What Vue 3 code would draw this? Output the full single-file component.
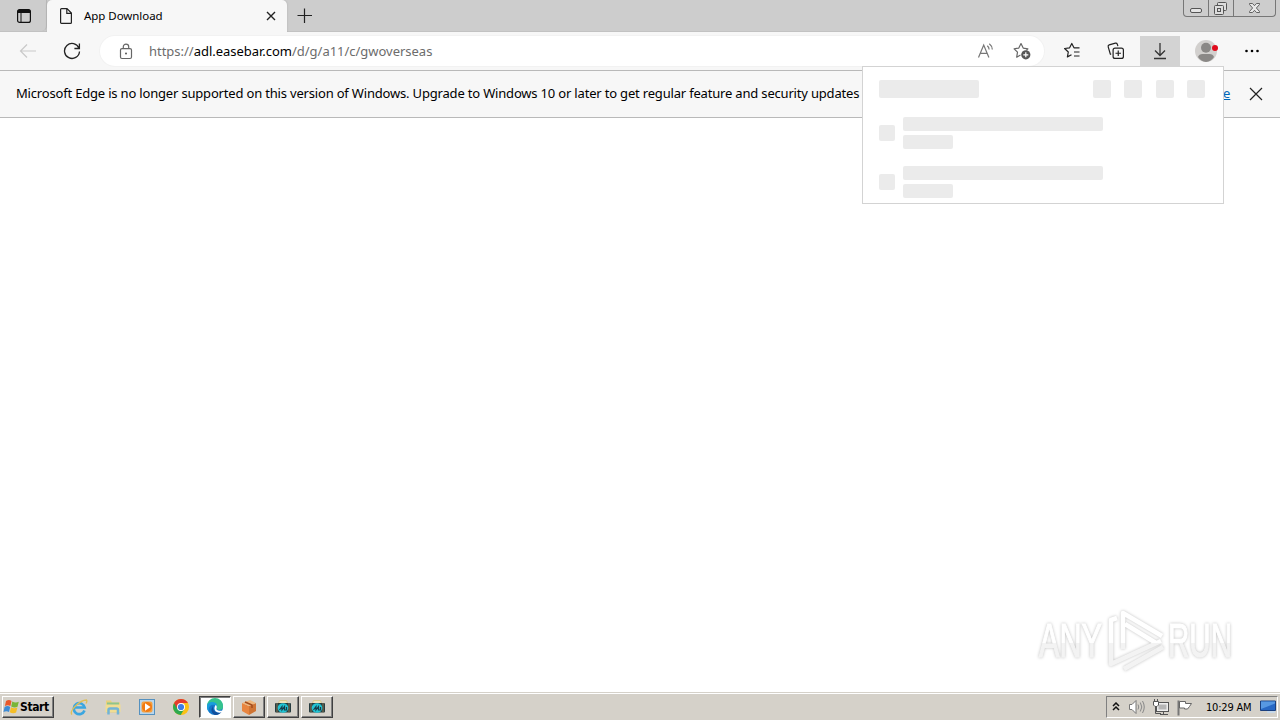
<template>
    <div class="screen">
        <header class="tabstrip">
            <div class="tab-actions">
                <svg width="16" height="16" viewBox="0 0 16 16">
                    <rect x="1.6" y="1.6" width="12.8" height="12.8" rx="2" fill="none" stroke="#111" stroke-width="1.2" />
                    <path d="M1.5 5V3.5q0-2 2-2h9q2 0 2 2V5z" fill="#111" />
                    <path d="M5 5v9" stroke="#111" />
                </svg>
            </div>
            <div class="tab">
                <svg width="14" height="16" viewBox="0 0 14 16" class="page-icon">
                    <path d="M1.6 1.5q0-.9.9-.9H8l4.4 4.500v9.400q0 .9-.9.9h-9q-.9 0-.9-.9zM7.800.8v4.500h4.400" fill="none" stroke="#222" stroke-width="1.2" />
                </svg>
                <span class="tab-title">{{ title }}</span>
                <svg width="10" height="10" viewBox="0 0 10 10" class="tab-close">
                    <path d="M1 1l8 8M9 1L1 9" stroke="#222" stroke-width="1.4" />
                </svg>
            </div>
            <svg width="16" height="16" viewBox="0 0 16 16" class="new-tab">
                <path d="M7.500 0.500v14.500M0.500 7.500h14.500" stroke="#222" stroke-width="1.200" />
            </svg>
            <div class="window-buttons">
                <span class="win-btn">
                    <svg width="24" height="16" viewBox="0 0 24 16">
                        <rect x="6.500" y="8.500" width="11" height="4" rx="1.500" fill="#e4e4e4" stroke="#555" />
                    </svg>
                </span>
                <span class="win-btn">
                    <svg width="24" height="16" viewBox="0 0 24 16">
                        <rect x="8.5" y="2.5" width="9" height="8" rx="1" fill="#ddd" stroke="#555" />
                        <rect x="5.5" y="5.5" width="9" height="9" rx="1" fill="#ddd" stroke="#555" />
                        <rect x="8.5" y="8.5" width="3" height="3" fill="#ddd" stroke="#555" />
                    </svg>
                </span>
                <span class="win-btn wide">
                    <svg width="41" height="16" viewBox="0 0 41 16">
                        <path d="M15.500 3.500h3l2 2.200 2-2.200h3v1L22.400 8l3.100 3.500v1h-3l-2-2.200-2 2.200h-3v-1L18.600 8l-3.100-3.500z" fill="#e8e8e8" stroke="#555" stroke-width=".9" />
                    </svg>
                </span>
            </div>
        </header>

        <div class="toolbar">
            <svg width="18" height="16" viewBox="0 0 18 16" class="back">
                <path d="M17 8H1.500M8 1.500L1.500 8 8 14.500" fill="none" stroke="#c9c9c9" stroke-width="1.200" />
            </svg>
            <svg width="18" height="18" viewBox="0 0 18 18" class="reload">
                <path d="M16 6.200A7.500 7.500 0 1 0 16.500 9.500M16.400 1.500v5h-5" fill="none" stroke="#222" stroke-width="1.300" />
            </svg>
            <div class="address">
                <svg width="14" height="17" viewBox="0 0 14 17" class="lock">
                    <rect x="1.500" y="5.600" width="11" height="9.900" rx="1.500" fill="none" stroke="#666" stroke-width="1.200" />
                    <path d="M4.300 5.500V3.800a2.700 2.700 0 0 1 5.400 0v1.700" fill="none" stroke="#666" stroke-width="1.200" />
                    <circle cx="7" cy="10.500" r="1" fill="#555" />
                </svg>
                <span class="url">https://<b>adl.easebar.com</b><i>/d/g/a11/c/gwoverseas</i></span>
                <svg width="18" height="18" viewBox="0 0 18 18" class="read">
                    <path d="M1.500 15.500L6.700 3l5.200 12.500M3.200 11.400h7M10.300 3.800a5 5 0 0 1 1.800 3.700M12.300 1.800a7.500 7.500 0 0 1 3 5.700" fill="none" stroke="#777" stroke-width="1.200" />
                </svg>
                <svg width="18" height="18" viewBox="0 0 18 18" class="star">
                    <path d="M7.500 13l-3.800 2.200.8-5-3.400-3.400 4.700-.7L8 1.600l2.200 4.500 4.700.7-1.600 1.600" fill="none" stroke="#666" stroke-width="1.200" stroke-linejoin="round" />
                    <circle cx="12.800" cy="12.800" r="4.600" fill="#555" />
                    <path d="M12.800 10.300v5M10.300 12.800h5" stroke="#fff" stroke-width="1.200" />
                </svg>
            </div>
            <div class="tools">
                <span class="tool">
                    <svg width="18" height="18" viewBox="0 0 18 18">
                        <path d="M8.500 12.800l-4.100 2.100.9-4.900-3.700-3.500 5-.7L8.800 1.500l2.200 4.300h5.500M11 10h5.500M11 14h5.500" fill="none" stroke="#222" stroke-width="1.200" stroke-linejoin="round" />
                    </svg>
                </span>
                <span class="tool">
                    <svg width="18" height="18" viewBox="0 0 18 18">
                        <path d="M4.200 12.400L3.300 12 1.200 4.800q-.4-1.400 1-1.900L8.400 1.200q1.400-.3 1.900 1l.6 2" fill="none" stroke="#222" stroke-width="1.200" />
                        <rect x="6.100" y="6.100" width="10.300" height="10.300" rx="2" fill="#f7f7f7" stroke="#222" stroke-width="1.200" />
                        <path d="M11.250 8.500v5.500M8.500 11.250H14" stroke="#222" stroke-width="1.200" />
                    </svg>
                </span>
                <span class="tool active">
                    <svg width="18" height="18" viewBox="0 0 18 18">
                        <path d="M9 1v12.500M4 8.500l5 5 5-5M3 16.500h12" fill="none" stroke="#333" stroke-width="1.300" />
                    </svg>
                </span>
                <span class="tool profile">
                    <svg width="24" height="24" viewBox="0 0 24 24">
                        <circle cx="12" cy="12" r="11" fill="#d2d0ce" />
                        <circle cx="12" cy="8.700" r="5" fill="#8a8886" />
                        <path d="M4 18q1-3 4.500-3h7q3.500 0 4.500 3A11 11 0 0 1 12 23a11 11 0 0 1-8-5z" fill="#8a8886" />
                        <circle cx="21" cy="9" r="3" fill="#e00b1c" />
                    </svg>
                </span>
                <span class="tool more">
                    <svg width="18" height="18" viewBox="0 0 18 18">
                        <circle cx="3.500" cy="9" r="1.300" /><circle cx="9" cy="9" r="1.300" /><circle cx="14.500" cy="9" r="1.300" />
                    </svg>
                </span>
            </div>
        </div>

        <div class="banner">
            <span class="banner-text">{{ notice }}</span>
            <a class="learn">e</a>
            <svg width="14" height="14" viewBox="0 0 14 14">
                <path d="M1 1l12 12M13 1L1 13" stroke="#222" stroke-width="1.200" />
            </svg>
        </div>

        <main class="page"></main>

        <section class="downloads">
            <div class="dl-head">
                <span class="bone heading"></span>
                <span v-for="n in 4" :key="n" class="bone action"></span>
            </div>
            <div v-for="n in 2" :key="n" class="dl-row">
                <span class="bone file"></span>
                <div>
                    <div class="bone name"></div>
                    <div class="bone size"></div>
                </div>
            </div>
        </section>

        <svg class="watermark" width="230" height="76" viewBox="0 0 230 76">
            <defs>
                <linearGradient id="fade" x1="0" y1="14" x2="0" y2="66" gradientUnits="userSpaceOnUse">
                    <stop offset=".49" stop-color="#fff" />
                    <stop offset=".5" stop-color="#f3f3f3" />
                </linearGradient>
            </defs>
            <g fill="url(#fade)" stroke="url(#fade)" stroke-width="1.200" font-family="Liberation Sans Narrow, Liberation Sans, sans-serif" font-size="49">
                <text x="7" y="53.500" textLength="63" lengthAdjust="spacingAndGlyphs">ANY</text>
                <text x="136" y="53.500" textLength="64" lengthAdjust="spacingAndGlyphs">RUN</text>
            </g>
            <path
                d="M91 46V10l39 23M93 21l31 19M85 15l-6 2v44l50-23M92 66l39-22" fill="none" stroke="url(#fade)"
                stroke-width="4.500" stroke-linejoin="round"
            />
        </svg>

        <footer class="taskbar">
            <div class="start">
                <svg width="17" height="16" viewBox="0 0 17 16">
                    <path d="M3 2q3-2 5.500 0L7.400 7q-2.500-1.700-5.500 0z" fill="#e9582b" />
                    <path d="M9.300 2.400q3 1.800 6.500.3l-1.300 5q-3 1.500-6.300-.3z" fill="#79b537" />
                    <path d="M1.600 8q3-1.800 5.600 0L6 13q-2.500-1.700-5.500 0z" fill="#3d8bd5" />
                    <path d="M8 8.300q3 1.800 6.400.3l-1.300 5q-3 1.500-6.300-.3z" fill="#f5be27" />
                </svg>
                <span>Start</span>
            </div>
            <div class="quick">
                <svg width="18" height="18" viewBox="0 0 18 18">
                    <path d="M14.500 12.500A5.500 5.500 0 1 1 14.700 9.500H5" fill="none" stroke="#3ba6e0" stroke-width="2.600" />
                    <path d="M2 16.500Q-.5 14 5.500 8T16.500 2q1 1-.5 3.500" fill="none" stroke="#e0bf55" stroke-width="1.300" />
                </svg>
                <svg width="18" height="18" viewBox="0 0 18 18">
                    <path d="M2 2.500h5l1 2h8v10H2z" fill="#e9d27b" />
                    <path d="M3 4.500h12v3H3z" fill="#8fc48a" />
                    <path d="M1.500 6.500h15V14h-15z" fill="#f1dd92" />
                    <path d="M4.500 16.500V12q0-1.500 1.500-1.500h6.500q1.500 0 1.500 1.500v4.500" fill="none" stroke="#72b4d6" stroke-width="2.500" />
                </svg>
                <svg width="18" height="18" viewBox="0 0 18 18">
                    <rect x="1.500" y="1.500" width="15" height="15" fill="#b9d6ec" stroke="#5591bf" />
                    <rect x="3.500" y="3.500" width="11" height="11" rx="2" fill="#f5a243" />
                    <circle cx="9" cy="9" r="5" fill="#f27b12" />
                    <path d="M7 5.300l5.500 3.700L7 12.700z" fill="#fff" />
                </svg>
                <svg width="18" height="18" viewBox="0 0 18 18">
                    <circle cx="9" cy="9" r="8" fill="#fbc116" />
                    <path d="M2.070 5A8 8 0 0 0 8.700 17L12.300 11 9 9z" fill="#2da94f" />
                    <path d="M2.070 5A8 8 0 0 1 15.930 5H9L5.500 11z" fill="#e33b2e" />
                    <circle cx="9" cy="9" r="4" fill="#fff" /><circle cx="9" cy="9" r="3.100" fill="#3c7de6" />
                </svg>
            </div>
            <div class="windows">
                <div class="task pressed">
                    <svg width="18" height="18" viewBox="0 0 18 18">
                        <circle cx="9" cy="9" r="8" fill="#1477ca" />
                        <path d="M1 8A8 8 0 0 1 17 8q.6 4-4 4-3 0-2-3Q10.500 4.500 6 5 2 5.500 1 8z" fill="#35c38e" />
                        <path d="M1 8Q2 3.500 7 4q4 .5 4.200 4Q7 5.500 4 8q-2 2-1 6Q.5 11.500 1 8z" fill="#1a9edc" />
                        <path d="M7 8q-1 5 4 6.500 2.500.6 5-1.200Q13 17.500 9 17 5 15 5.500 11z" fill="#124f9c" />
                        <path d="M9.500 7q2 1 1 3.500-.3 2 3 2.300h3.500l-1 1.500q-4 1-6.500-1-2.200-3 0-6.300z" fill="#fff" />
                    </svg>
                </div>
                <div class="task">
                    <svg width="18" height="18" viewBox="0 0 18 18">
                        <path d="M2 5l7 3v9l-7-4z" fill="#e8853f" /><path d="M9 8l7-3v8l-7 4z" fill="#cf7433" />
                        <path d="M2 5l8-3 6 3-7 3z" fill="#efb77c" />
                        <path d="M5 4l7 3v3" fill="none" stroke="#a44c1c" stroke-width="1.500" />
                    </svg>
                </div>
                <div v-for="n in 2" :key="n" class="task">
                    <svg width="18" height="18" viewBox="0 0 18 18">
                        <path d="M4.500 5l1-2.500h7l1 2.500" fill="#eee3bd" stroke="#d9c98e" />
                        <rect x="1" y="5" width="16" height="9.500" rx="1" fill="#273c40" />
                        <path d="M3 5v9.500M15 5v9.500" stroke="#8a7950" />
                        <ellipse cx="9" cy="10" rx="5.300" ry="4.800" fill="#22c4d2" />
                        <path d="M5.500 12L8 8.500V12l2.500-3.500V12h2V9" fill="none" stroke="#173d49" stroke-width="1.200" />
                    </svg>
                </div>
            </div>
            <div class="tray">
                <svg width="8" height="10" viewBox="0 0 8 10" class="chevrons">
                    <path d="M1 4l3-3 3 3M1 8l3-3 3 3" fill="none" stroke="#111" stroke-width="1.500" />
                </svg>
                <svg width="18" height="16" viewBox="0 0 18 16" class="sound">
                    <path d="M1.500 5.500H4l4-4v13l-4-4H1.500z" fill="#fff" stroke="#777" />
                    <path d="M10 5.500q1.500 2.500 0 5M12.300 3.500q3 4.500 0 9M14.500 2q3.500 6 0 12" fill="none" stroke="#888" />
                </svg>
                <svg width="18" height="18" viewBox="0 0 18 18" class="network">
                    <rect x="4.500" y="4.500" width="12" height="9" fill="#eee" stroke="#555" />
                    <rect x="6.500" y="6.500" width="8" height="5" fill="#b5b5b5" />
                    <path d="M8 16.500h8M11.500 14v2M3.500 8v7.500H9M2.500 1v3M5.500 1v3" fill="none" stroke="#555" />
                    <path d="M1.500 3.500h5V7L5 8.500H3L1.500 7z" fill="#fff" stroke="#555" />
                </svg>
                <svg width="17" height="17" viewBox="0 0 17 17" class="flag">
                    <path d="M2.500 1.500v15" stroke="#777" stroke-width="2" />
                    <path d="M3.500 2.500h6v2h6l-2 3-2 2.500h-3V9h-5z" fill="#fff" stroke="#666" />
                </svg>
                <span class="clock">10:29 AM</span>
                <svg width="16" height="14" viewBox="0 0 16 14" class="desktop">
                    <path d="M.5 1h15v9.500H.5z" fill="#2868c4" stroke="#1b407f" />
                    <path d="M1 1.500h14v2L1 9z" fill="#5798e2" />
                    <path d="M7 12h8" stroke="#c7d8e8" stroke-width="2" />
                </svg>
            </div>
        </footer>
    </div>
</template>

<script setup>
    import { ref } from 'vue';

    const title = ref('App Download');
    const notice = ref('Microsoft Edge is no longer supported on this version of Windows. Upgrade to Windows 10 or later to get regular feature and security updates');
</script>

<style>
    body {
        margin: 0;
        overflow: hidden;
    }
</style>

<style scoped>
    .screen {
        position: relative;
        display: flex;
        flex-direction: column;
        width: 1280px;
        height: 720px;
        background: #fff;
        font-family: "Noto Sans", "Open Sans", sans-serif;
        color: #000;
        overflow: hidden;
    }
    svg {
        display: block;
        flex: none;
    }
    span, a {
        white-space: nowrap;
    }
    .tabstrip {
        display: flex;
        height: 32px;
        background: #cdcdcd;
        box-sizing: border-box;
        border-bottom: 1px solid #c2c2c2;
    }
    .tab-actions {
        width: 47px;
        height: 31px;
        box-sizing: border-box;
        padding: 8px 0 0 16px;
        border-right: 1px solid #b8b8b8;
        border-radius: 0 0 5px 0;
    }
    .tab {
        display: flex;
        align-items: center;
        width: 240px;
        height: 32px;
        border-radius: 5px 5px 0 0;
        background: #f7f7f7;
        box-shadow: 0 0 2px #aaa;
        clip-path: inset(0 -3px 0 -3px);
    }
    .page-icon {
        margin-left: 12px;
    }
    .tab-title {
        width: 182px;
        margin-left: 11px;
        font-size: 11.5px;
        line-height: 30px;
        letter-spacing: -0.05px;
    }
    .new-tab {
        margin: 8px 0 0 10px;
    }
    .window-buttons {
        display: flex;
        height: 16px;
        margin: 0 4px 0 auto;
        border: 1px solid #777;
        border-top: 0;
        border-radius: 0 0 4px 4px;
    }
    .win-btn {
        width: 24px;
        border-right: 1px solid #777;
        overflow: hidden;
    }
    .win-btn.wide {
        width: 41px;
        border-right: 0;
    }
    .toolbar {
        display: flex;
        align-items: center;
        height: 38px;
        background: #f7f7f7;
        border-bottom: 1px solid #b9b9b9;
    }
    .back {
        margin-left: 19px;
    }
    .reload {
        margin-left: 26px;
    }
    .address {
        display: flex;
        align-items: center;
        box-sizing: border-box;
        width: 944px;
        height: 30px;
        margin-left: 19px;
        padding-left: 19px;
        border-radius: 15px;
        background: #fff;
        box-shadow: 0 0 0 1px #f2f2f2;
    }
    .url {
        width: 812px;
        margin-left: 16px;
        font-size: 13px;
        letter-spacing: -0.02px;
        color: #6c6c6c;
    }
    .url b {
        font-weight: normal;
        color: #000;
    }
    .url i {
        font-style: normal;
    }
    .read {
        margin-left: 16px;
    }
    .star {
        margin-left: 18px;
    }
    .tools {
        display: flex;
        align-items: center;
        margin-left: 8px;
        gap: 4px;
    }
    .tool {
        display: flex;
        align-items: center;
        justify-content: center;
        width: 40px;
        height: 30px;
    }
    .tool.active {
        background: #d3d3d3;
    }
    .tool.profile {
        width: 44px;
    }
    .banner {
        display: flex;
        align-items: center;
        height: 46px;
        padding-left: 16px;
        background: #f7f7f7;
        border-bottom: 1px solid #b9b9b9;
    }
    .banner-text {
        width: 1207px;
        padding-bottom: 2px;
        font-size: 13px;
        letter-spacing: -0.182px;
    }
    .learn {
        width: 7px;
        margin-right: 19px;
        padding-bottom: 2px;
        font-size: 13px;
        color: #0067b8;
        text-decoration: underline;
    }
    .page {
        flex: 1;
    }
    .downloads {
        position: absolute;
        left: 862px;
        top: 66px;
        box-sizing: border-box;
        width: 362px;
        height: 138px;
        padding: 13px 18px 0 16px;
        border: 1px solid #d3d3d3;
        background: #fff;
    }
    .bone {
        background: #ebebeb;
        border-radius: 2px;
    }
    .dl-head {
        display: flex;
        gap: 13.5px;
        height: 18px;
        margin-bottom: 19px;
    }
    .heading {
        width: 100px;
        margin-right: auto;
    }
    .action {
        width: 18px;
    }
    .dl-row {
        display: flex;
        align-items: center;
        gap: 8px;
        height: 32px;
        margin-bottom: 17px;
    }
    .file {
        width: 16px;
        height: 16px;
    }
    .name {
        width: 200px;
        height: 14px;
        margin-bottom: 4px;
    }
    .size {
        width: 50px;
        height: 14px;
    }
    .watermark {
        position: absolute;
        left: 1032px;
        top: 603px;
        overflow: visible;
        filter: drop-shadow(0 0 1.5px rgba(0, 0, 0, .25));
    }
    .taskbar {
        display: flex;
        align-items: center;
        box-sizing: border-box;
        height: 28px;
        padding: 1px 2px 0 2px;
        background: #d5d1c9;
        border-top: 1px solid #d5d1c9;
        box-shadow: inset 0 1px #fff;
    }
    .start, .task {
        display: flex;
        align-items: center;
        box-sizing: border-box;
        height: 22px;
        border: 1px solid;
        border-color: #fff #404040 #404040 #fff;
        box-shadow: inset -1px -1px #808080;
    }
    .start {
        width: 52px;
        font: bold 12px "DejaVu Sans Condensed", "DejaVu Sans", sans-serif;
        letter-spacing: -0.4px;
    }
    .quick {
        display: flex;
        gap: 16px;
        margin-left: 16px;
    }
    .windows {
        display: flex;
        gap: 2px;
        margin-left: 9px;
    }
    .task {
        justify-content: center;
        width: 32px;
    }
    .task.pressed {
        border-color: #404040 #fff #fff #404040;
        background: #fff;
        box-shadow: inset 1px 1px #808080;
    }
    .tray {
        display: flex;
        align-items: center;
        box-sizing: border-box;
        width: 172px;
        height: 22px;
        margin-left: auto;
        border: 1px solid;
        border-color: #808080 #fff #fff #808080;
    }
    .chevrons {
        margin-left: 5px;
    }
    .sound {
        margin-left: 8px;
    }
    .network {
        margin-left: 6px;
    }
    .flag {
        margin-left: 6px;
    }
    .clock {
        width: 48px;
        margin-left: 13px;
        font: 11px "DejaVu Sans Condensed", "DejaVu Sans", sans-serif;
        letter-spacing: -0.2px;
    }
    .desktop {
        margin-left: 6px;
    }
</style>
